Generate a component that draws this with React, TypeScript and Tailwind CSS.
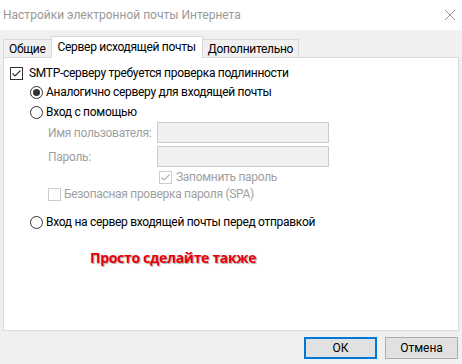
import React from "react";

function CheckBox({ checked, disabled }: { checked?: boolean; disabled?: boolean }) {
  return (
    <span
      className={`flex h-[13px] w-[13px] shrink-0 items-center justify-center border bg-white ${
        disabled ? "border-[#cccccc]" : "border-[#333333]"
      }`}
    >
      {checked && (
        <svg width="11" height="11" viewBox="0 0 11 11">
          <path
            d="M1.5 5.5 L4 8 L9.5 2.5"
            fill="none"
            stroke={disabled ? "#b5b5b5" : "#333333"}
            strokeWidth="1.2"
          />
        </svg>
      )}
    </span>
  );
}

function Radio({ checked }: { checked?: boolean }) {
  return (
    <span className="flex h-[13px] w-[13px] shrink-0 items-center justify-center rounded-full border border-[#333333] bg-white">
      {checked && <span className="h-[7px] w-[7px] rounded-full bg-[#333333]" />}
    </span>
  );
}

const tabs = [
  { label: "Общие", active: false },
  { label: "Сервер исходящей почты", active: true },
  { label: "Дополнительно", active: false },
];

export default function App() {
  return (
    <div className="flex h-[364px] w-[462px] flex-col bg-[#f0f0f0] text-[12px] text-black [font-family:Roboto,sans-serif]">
      {/* Title bar */}
      <div className="flex h-[30px] items-center justify-between bg-white pl-[3px] pr-[5px]">
        <span className="text-[#999999]">Настройки электронной почты Интернета</span>
        <svg width="12" height="12" viewBox="0 0 12 12" className="mr-[1px]">
          <path d="M1 1 L11 11 M11 1 L1 11" stroke="#9a9a9a" strokeWidth="1" />
        </svg>
      </div>

      {/* Tabs */}
      <div className="mt-[6px] flex h-[21px] items-end pl-[3px] tracking-[-0.3px]">
        {tabs.map((t) =>
          t.active ? (
            <div
              key={t.label}
              className="relative z-10 -mb-px flex h-[22px] items-center border border-b-0 border-[#d9d9d9] bg-white px-[6px] pb-[2px]"
            >
              {t.label}
            </div>
          ) : (
            <div
              key={t.label}
              className="flex h-[18px] items-center border border-b-0 border-[#d9d9d9] bg-[#f0f0f0] px-[5px] pt-[1px] first:border-r-0 last:border-l-0"
            >
              {t.label}
            </div>
          )
        )}
      </div>

      {/* Panel */}
      <div className="mx-[3px] flex h-[274px] w-[456px] flex-col border border-[#d9d9d9] bg-white pl-[6px] pt-[7px] tracking-[-0.3px]">
        <div className="flex h-[16px] items-center gap-[6px]">
          <CheckBox checked />
          <span>SMTP-серверу требуется проверка подлинности</span>
        </div>

        <div className="mt-[1px] flex flex-col pl-[20px]">
          <div className="flex h-[20px] items-center gap-[3px]">
            <Radio checked />
            <span>Аналогично серверу для входящей почты</span>
          </div>
          <div className="flex h-[20px] items-center gap-[3px]">
            <Radio />
            <span>Вход с помощью</span>
          </div>

          <div className="flex flex-col pl-[18px] text-[#a0a0a0]">
            <div className="flex h-[21px] items-center">
              <span className="w-[109px] whitespace-nowrap">Имя пользователя:</span>
              <div className="h-[21px] w-[172px] border border-[#cccccc] bg-[#f0f0f0]" />
            </div>
            <div className="mt-[3px] flex h-[21px] items-center">
              <span className="w-[109px] whitespace-nowrap">Пароль:</span>
              <div className="h-[21px] w-[172px] border border-[#cccccc] bg-[#f0f0f0]" />
            </div>
            <div className="mt-[2px] flex h-[16px] items-center gap-[4px] pl-[111px]">
              <CheckBox checked disabled />
              <span>Запомнить пароль</span>
            </div>
            <div className="mt-[1px] flex h-[16px] items-center gap-[3px]">
              <CheckBox disabled />
              <span>Безопасная проверка пароля (SPA)</span>
            </div>
          </div>

          <div className="mt-[10px] flex h-[20px] items-center gap-[3px]">
            <Radio />
            <span>Вход на сервер входящей почты перед отправкой</span>
          </div>
        </div>

        <div className="mt-[16px] pl-[80px] text-[14px] font-bold leading-[20px] tracking-[-0.3px] text-[#e8000b] [font-family:'Open_Sans',sans-serif] [text-shadow:1px_1px_1px_rgba(0,0,0,0.35)]">
          Просто сделайте также
        </div>
      </div>

      {/* Buttons */}
      <div className="mt-[6px] flex justify-end gap-[8px] pr-[4px]">
        <button className="h-[22px] w-[73px] border-2 border-[#0078d7] bg-[#e1e1e1] pb-[1px]">
          ОК
        </button>
        <button className="h-[22px] w-[73px] border border-[#adadad] bg-[#e1e1e1] pb-[1px]">
          Отмена
        </button>
      </div>
    </div>
  );
}
